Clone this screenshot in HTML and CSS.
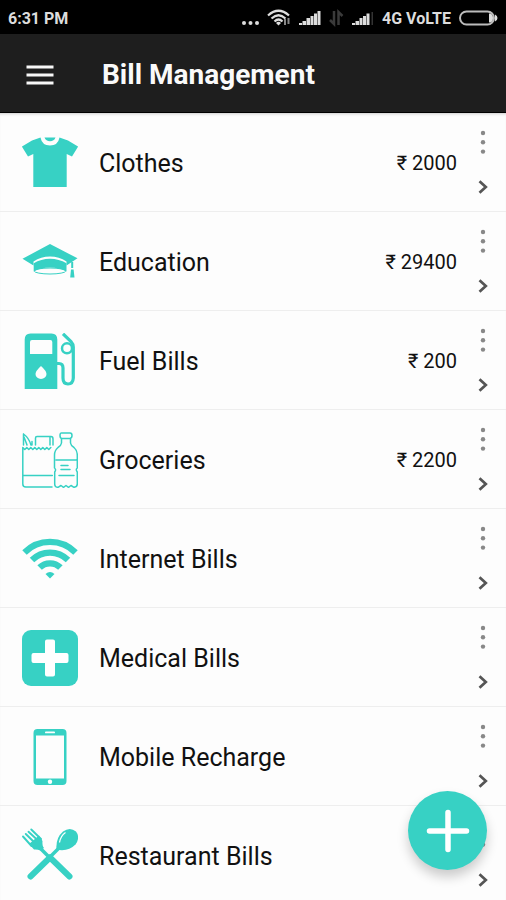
FILE: index.html
```html
<!DOCTYPE html>
<html lang="en">
<head>
<meta charset="utf-8">
<meta name="viewport" content="width=device-width, initial-scale=1">
<title>Bill Management</title>
<link rel="stylesheet" href="styles.css">
</head>
<body>
<svg class="defs" aria-hidden="true">
  <symbol id="dots" viewBox="0 0 6 24"><circle cx="3" cy="3" r="2.2"/><circle cx="3" cy="12.3" r="2.2"/><circle cx="3" cy="21.6" r="2.2"/></symbol>
  <symbol id="chevron" viewBox="0 0 10 14"><path d="M1.5 1.2 7.8 7 1.5 12.8" fill="none" stroke="currentColor" stroke-width="2.7"/></symbol>
</svg>

<div class="status">
  <span>6:31 PM</span>
  <div class="status-icons">
    <svg width="18" height="20" viewBox="0 0 18 20"><g fill="#ddd"><circle cx="3" cy="15" r="2"/><circle cx="9.500" cy="15" r="2"/><circle cx="16" cy="15" r="2"/></g></svg>
    <svg width="24" height="20" viewBox="0 0 24 20"><g fill="none" stroke="#ddd" stroke-width="2.200"><path d="M1 7.500Q11.500-2 22 7.500M4.500 10.500Q11.500 4 18.500 10.500M7.500 13.500Q11.500 9.500 15.500 13.500"/></g><path d="M9 15Q11.500 12.500 14 15L11.500 17.500z" fill="#ddd"/><path d="M18 11v6M21.500 10v6" stroke="#888" stroke-width="2"/></svg>
    <svg width="22" height="20" viewBox="0 0 22 20"><path d="M0 17v-2h3v2zM3.500 17v-4h3.500v4zM7.500 17V10h3.500v7zM11.500 17V8h3v9zM15 17V5.500H18V17zM18.500 17V3h3v14z" fill="#ddd"/></svg>
    <svg width="15" height="20" viewBox="0 0 15 20"><path d="M5 3v13L1 12M9.500 17V4l4 4" fill="none" stroke="#3a3a3a" stroke-width="2.500"/></svg>
    <svg width="22" height="20" viewBox="0 0 22 20"><path d="M0 17v-2h3v2zM3.500 17v-4h3.500v4zM7.500 17V10h3v7zM11 17V8h3v9zM14.500 17V5.500h3V17z" fill="#ddd"/><path d="M19.500 17V4H21v13z" fill="#333"/></svg>
    <span>4G VoLTE</span>
    <svg width="39" height="20" viewBox="0 0 39 20"><rect x="1" y="3.500" width="34" height="13" rx="6.500" fill="none" stroke="#bbb" stroke-width="2"/><path d="M30 5.500h1.500Q34 6.500 34 10t-2.500 4.500H30zM36 6.500Q38.500 7.500 38.500 10T36 13.500z" fill="#ddd"/></svg>
  </div>
</div>

<header class="appbar">
  <button class="icon-button nav-button" aria-label="Open menu">
    <svg width="28" height="20" viewBox="0 0 28 20"><path d="M.5 2h27M.5 10h27M.5 18h27" stroke="#f7f7f7" stroke-width="3"/></svg>
  </button>
  <h1>Bill Management</h1>
</header>

<main class="content">
<ul class="bills">
  <li class="bill">
    <svg class="bill-icon" viewBox="0 0 56 56"><path d="M18.500 2.500Q20 10.500 28 10.500T37.500 2.500L46 5.500 56.200 11.500 50 21.500 44.700 19V52H11.300V19L6 21.500-.2 11.500 10 5.500z"/><path d="M22.500 2.500h11Q32 6.300 28 6.300T22.500 2.500z"/></svg>
    <span class="name">Clothes</span><span class="amount">₹ 2000</span>
    <div class="actions"><button class="icon-button" aria-label="Clothes options"><svg class="dots"><use href="#dots"/></svg></button><button class="icon-button" aria-label="Open Clothes"><svg class="chevron"><use href="#chevron"/></svg></button></div>
  </li>
  <li class="bill">
    <svg class="bill-icon" viewBox="0 0 56 56"><path d="M28 10 55.500 24.300 44.500 31.500V27.500Q37 22.600 28 22.600T11.500 27.500V31.500L.5 24.800z"/><path d="M11.700 29.300Q19 24.800 28 24.800T44.500 29.300V37.500Q37 33.500 28 33.500T11.700 37.500z"/><ellipse cx="28" cy="37" rx="15.800" ry="3" fill="none" stroke="#37d1c4"/><path d="M49.200 28h2v6h-2zM49 35.500h2.600L52.500 43.500h-4.300z"/></svg>
    <span class="name">Education</span><span class="amount">₹ 29400</span>
    <div class="actions"><button class="icon-button" aria-label="Education options"><svg class="dots"><use href="#dots"/></svg></button><button class="icon-button" aria-label="Open Education"><svg class="chevron"><use href="#chevron"/></svg></button></div>
  </li>
  <li class="bill">
    <svg class="bill-icon" viewBox="0 0 56 56"><path fill-rule="evenodd" d="M8.500.5h21q5.800 0 5.800 6V56H2.700V6.500q0-6 5.800-6zM10 7Q8 7 8 9v12h22.300V9q0-2-2-2zM19 33Q13.500 38 13.500 41a5.500 5 0 0 0 11 0Q24.500 38 19 33z"/><g fill="none" stroke="#37d1c4"><path stroke-width="3.200" d="M35 30.500h2Q41 30.500 41 35V45Q41 51 46 51T51.300 45V14Q51.300 11 49 8.500L41 .8"/><circle cx="45" cy="15.300" r="5" stroke-width="2.500"/></g></svg>
    <span class="name">Fuel Bills</span><span class="amount">₹ 200</span>
    <div class="actions"><button class="icon-button" aria-label="Fuel Bills options"><svg class="dots"><use href="#dots"/></svg></button><button class="icon-button" aria-label="Open Fuel Bills"><svg class="chevron"><use href="#chevron"/></svg></button></div>
  </li>
  <li class="bill">
    <svg class="bill-icon" viewBox="0 0 56 56"><g fill="none" stroke="#37d1c4" stroke-width="1.500" stroke-linejoin="round" stroke-linecap="round"><path d="M.8 15.500V52Q.8 55 3.800 55H30M.8 43.500h29.500M.8 15.500l2 2 2-2 2 2 2-2 2 2 2-2 2 2 2-2 2 2 2-2 2 2 2-2 2 2 2-2"/><path d="M1.500 2V13M1.500 2Q7 6 9 13M2 5l3 8M10 9.500V13M13.500 13V6Q13.500 4.500 15 4.500H29Q31 4.500 31 7V13M28 5v8"/><path d="M40 1H48Q50 1 50 3.500T48 6.500H40Q38 6.500 38 3.500T40 1zM39.500 6.500V11Q39 14 36 15.500 32.500 18.500 32.500 23V36Q34.500 37.500 32.700 40V52Q32.700 55.300 36 55.300L39 53.500 41.500 55.300 44 53.500 46.500 55.300 49 53.500 52 55.300Q55.300 55 55.300 52V40Q53.300 37.500 55.300 36V23Q55.300 18.500 52 15.500 49 14 48.500 11V6.500M34 28H54.500M37 43.500H52M39 33.500H46M39 37.500h9"/></g></svg>
    <span class="name">Groceries</span><span class="amount">₹ 2200</span>
    <div class="actions"><button class="icon-button" aria-label="Groceries options"><svg class="dots"><use href="#dots"/></svg></button><button class="icon-button" aria-label="Open Groceries"><svg class="chevron"><use href="#chevron"/></svg></button></div>
  </li>
  <li class="bill">
    <svg class="bill-icon" viewBox="0 0 56 56"><g fill="none" stroke="#37d1c4" stroke-width="6.300"><path d="M2.500 21.500A36 36 0 0 1 53.500 21.500M10 29A25.500 25.500 0 0 1 46 29M17.600 36.600A14.700 14.700 0 0 1 38.400 36.600"/></g><path d="M23.500 43Q28 39 32.500 43L28 47.500z"/></svg>
    <span class="name">Internet Bills</span>
    <div class="actions"><button class="icon-button" aria-label="Internet Bills options"><svg class="dots"><use href="#dots"/></svg></button><button class="icon-button" aria-label="Open Internet Bills"><svg class="chevron"><use href="#chevron"/></svg></button></div>
  </li>
  <li class="bill">
    <svg class="bill-icon" viewBox="0 0 56 56"><rect width="56" height="56" rx="9"/><path d="M25 9.500h6q2 0 2 2V23H44.500q2 0 2 2v6q0 2-2 2H33V44.500q0 2-2 2H25q-2 0-2-2V33H11.500q-2 0-2-2V25q0-2 2-2H23V11.500q0-2 2-2z" fill="#fff"/></svg>
    <span class="name">Medical Bills</span>
    <div class="actions"><button class="icon-button" aria-label="Medical Bills options"><svg class="dots"><use href="#dots"/></svg></button><button class="icon-button" aria-label="Open Medical Bills"><svg class="chevron"><use href="#chevron"/></svg></button></div>
  </li>
  <li class="bill">
    <svg class="bill-icon" viewBox="0 0 56 56"><path fill-rule="evenodd" d="M15.500 0h25q4 0 4 4V52q0 4-4 4h-25q-4 0-4-4V4q0-4 4-4zM14 6.500V49.500H42V6.500z"/><rect x="23" y="2.500" width="10" height="1.800" rx=".9" fill="#fff"/><circle cx="28" cy="52.700" r="2.200" fill="#fff"/></svg>
    <span class="name">Mobile Recharge</span>
    <div class="actions"><button class="icon-button" aria-label="Mobile Recharge options"><svg class="dots"><use href="#dots"/></svg></button><button class="icon-button" aria-label="Open Mobile Recharge"><svg class="chevron"><use href="#chevron"/></svg></button></div>
  </li>
  <li class="bill">
    <svg class="bill-icon" viewBox="0 0 56 56"><g fill="none" stroke="#37d1c4" stroke-linecap="round"><path stroke-width="3.500" d="M19 21 27 29M36 21 28 29"/><path stroke-width="6" d="M28 29.500 47.500 48.500M28 29.500 8.500 48.500"/><path stroke-width="1.900" d="M1 8.500 9.500 18M3.800 6 13 15M6.500 3.800 16 12.500M9.300 1.500 19 11"/></g><path d="M7 16 17 7.500 20.500 13Q20 18 22 20L18.500 22.500Q15 21 12 21.500z"/><path d="M34.500 21.500Q33.500 10 41 3.500 48-1.500 54 3.500 58.500 9.500 53.500 16.500 46 24 34.500 21.500z"/><path d="M37.500 14.500Q38.500 8 43.500 4.500" fill="none" stroke="#fff" stroke-width="1.300"/></svg>
    <span class="name">Restaurant Bills</span>
    <div class="actions"><button class="icon-button" aria-label="Restaurant Bills options"><svg class="dots"><use href="#dots"/></svg></button><button class="icon-button" aria-label="Open Restaurant Bills"><svg class="chevron"><use href="#chevron"/></svg></button></div>
  </li>
</ul>
</main>
<button class="fab" aria-label="Add bill"><svg width="44" height="44" viewBox="0 0 44 44"><path d="M22 3.500V40.500M3.500 22H40.500" stroke="#fff" stroke-width="5.500" stroke-linecap="round"/></svg></button>
</body>
</html>
```
FILE: styles.css
```css
* {
  box-sizing: border-box;
}

body {
  margin: 0;
  height: 100vh;
  display: flex;
  flex-direction: column;
  overflow: hidden;
  background: #fdfdfd;
  color: #111;
  font-family: Roboto, "Noto Sans", sans-serif;
}

.defs {
  position: absolute;
  width: 0;
  height: 0;
}

.icon-button {
  display: flex;
  align-items: center;
  justify-content: center;
  padding: 0;
  border: 0;
  background: none;
  color: #555;
  cursor: pointer;
}

.status {
  flex: none;
  display: flex;
  align-items: center;
  justify-content: space-between;
  height: 34px;
  padding: 2px 8px 0;
  background: #000;
  color: #ddd;
  font-size: 16px;
  font-weight: 700;
}

.status-icons {
  display: flex;
  align-items: center;
  gap: 8px;
}

.appbar {
  flex: none;
  display: flex;
  align-items: center;
  gap: 36px;
  height: 79px;
  padding: 3px 14px 0;
  background: #1e1e1e;
  border-bottom: 1px solid #000;
  color: #fafafa;
}

.nav-button {
  width: 52px;
  height: 52px;
}

h1 {
  margin: 0;
  font-size: 28px;
  font-weight: 700;
}

.content {
  flex: 1;
  min-height: 0;
  overflow-y: auto;
  scrollbar-width: none;
  box-shadow: inset 0 3px 3px -2px #ccc;
}

.bills {
  margin: 0;
  padding: 0;
  list-style: none;
}

.bill {
  display: flex;
  align-items: center;
  height: 99px;
  padding: 2px 12px 0 22px;
  border-bottom: 1px solid #eee;
}

.bill-icon {
  flex: none;
  width: 56px;
  height: 56px;
  margin-right: 21px;
  fill: #37d1c4;
}

.name {
  flex: 1;
  font-size: 25px;
}

.amount {
  margin-right: 15px;
  font-size: 20px;
}

.actions {
  display: flex;
  flex-direction: column;
  align-items: center;
  gap: 26px;
  width: 22px;
  padding-bottom: 2px;
}

.actions .icon-button {
  width: 22px;
}

.dots {
  width: 6px;
  height: 24px;
  fill: #888;
}

.chevron {
  width: 10px;
  height: 14px;
}

.fab {
  position: fixed;
  right: 19px;
  bottom: 30px;
  display: flex;
  align-items: center;
  justify-content: center;
  width: 79px;
  height: 79px;
  padding: 0;
  border: 0;
  border-radius: 50%;
  background: #37d1c4;
  box-shadow: 0 7px 12px rgba(0, 0, 0, 0.2);
  cursor: pointer;
}
```
